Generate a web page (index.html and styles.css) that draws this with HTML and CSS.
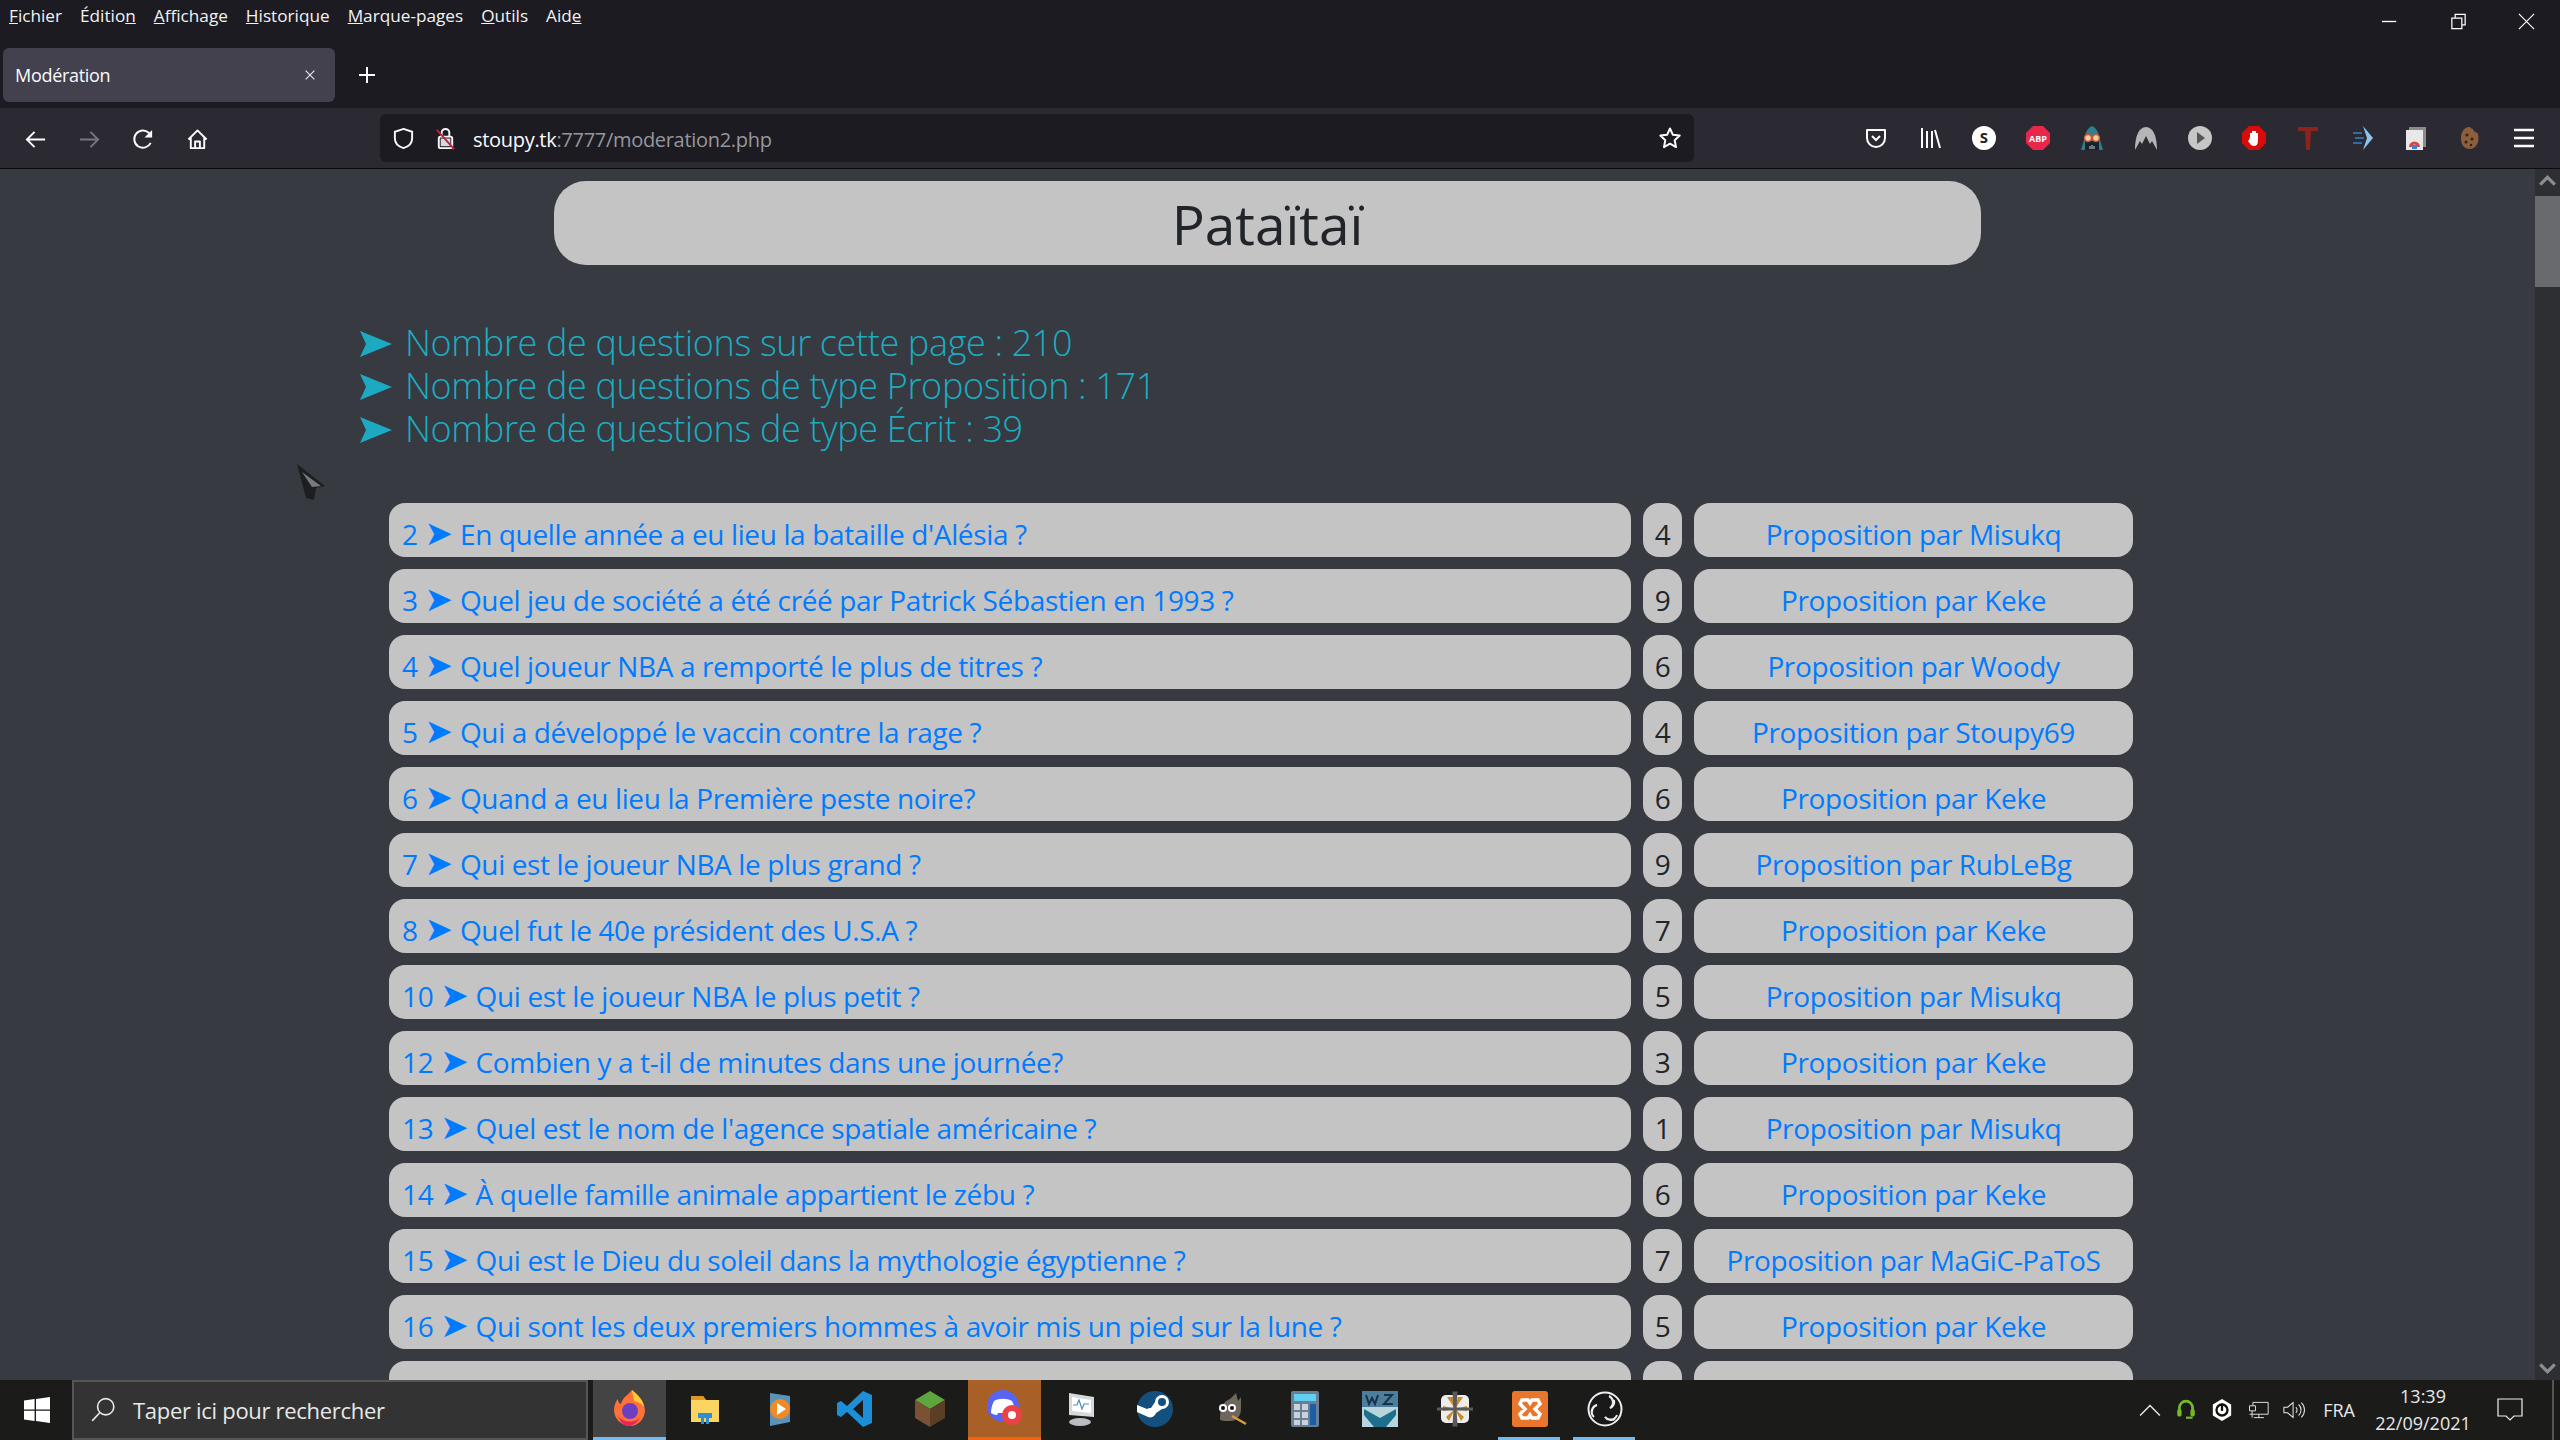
FILE: index.html
```html
<!DOCTYPE html>
<html lang="fr">
<head>
    <meta charset="UTF-8">
    <title>Modération</title>
    <link rel="stylesheet" href="styles.css">
</head>
<body>
<div class="window">
    <header class="titlebar">
        <div class="menu-row">
            <nav class="menu">
                <span><u>F</u>ichier</span>
                <span>Éditio<u>n</u></span>
                <span><u>A</u>ffichage</span>
                <span><u>H</u>istorique</span>
                <span><u>M</u>arque-pages</span>
                <span><u>O</u>utils</span>
                <span>Aid<u>e</u></span>
            </nav>
            <div class="win-controls">
                <svg viewBox="0 0 20 20"><path d="M1 10h15" stroke="#fff" stroke-width="1.400"/></svg>
                <svg viewBox="0 0 20 20"><path d="M3 6.500h10.500v11H3zM6.500 6.500V2.500H17v11h-3.500" fill="none" stroke="#fff" stroke-width="1.300"/></svg>
                <svg viewBox="0 0 20 20"><path d="M2 2l16 16M18 2L2 18" stroke="#fff" stroke-width="1.200"/></svg>
            </div>
        </div>
        <div class="tab-row">
            <div class="tab">
                <span>Modération</span>
                <svg class="tab-close" viewBox="0 0 16 16"><path d="M3 3l10 10M13 3L3 13" stroke="#e6e6e6" stroke-width="1.400"/></svg>
            </div>
            <svg class="tab-new" viewBox="0 0 20 20"><path d="M10 2v16M2 10h16" stroke="#fbfbfe" stroke-width="2"/></svg>
        </div>
    </header>

    <div class="navbar">
        <div class="nav-buttons">
            <svg viewBox="0 0 24 24"><path d="M22 12H3M11 4l-8 8 8 8" fill="none" stroke="#fbfbfe" stroke-width="2"/></svg>
            <svg viewBox="0 0 24 24"><path d="M2 12h19M13 4l8 8-8 8" fill="none" stroke="#77767e" stroke-width="2"/></svg>
            <svg viewBox="0 0 24 24"><path d="M19.500 15.500A9 9 0 1 1 17.500 5L20 8" fill="none" stroke="#fbfbfe" stroke-width="2"/><path d="M21 2v8h-8z" fill="#fbfbfe"/></svg>
            <svg viewBox="0 0 24 24"><path d="M2.500 12L12 2.500 21.500 12M5 10v11h14V10M9.500 21v-7h5v7" fill="none" stroke="#fbfbfe" stroke-width="2" stroke-linejoin="round"/></svg>
        </div>
        <div class="urlbar">
            <svg class="url-icon" viewBox="0 0 24 24"><path d="M12 2l9 3v7c0 5-4 8.500-9 10-5-1.500-9-5-9-10V5z" fill="none" stroke="#fbfbfe" stroke-width="2"/></svg>
            <svg class="url-icon" viewBox="0 0 24 24"><path d="M8 10V6a4 4 0 0 1 8 0v4" fill="none" stroke="#fbfbfe" stroke-width="2"/><rect x="5" y="10" width="14" height="12" rx="2" fill="none" stroke="#fbfbfe" stroke-width="2"/><rect x="7" y="12" width="10" height="8" fill="#d8d8dc"/><path d="M3 3l18 20" stroke="#c4213f" stroke-width="2"/></svg>
            <span class="url-text">stoupy.tk<span class="url-dim">:7777/moderation2.php</span></span>
            <svg class="url-star" viewBox="0 0 24 24"><path d="M12 2.500l2.900 6.300 6.800.8-5 4.700 1.300 6.800-6-3.400-6 3.400 1.300-6.800-5-4.700 6.800-.8z" fill="none" stroke="#fbfbfe" stroke-width="2" stroke-linejoin="round"/></svg>
        </div>
        <div class="addons">
            <svg viewBox="0 0 24 24"><path d="M3 4h18v8a9 9 0 0 1-18 0z" fill="none" stroke="#fbfbfe" stroke-width="2" stroke-linejoin="round"/><path d="M8 10l4 4 4-4" fill="none" stroke="#fbfbfe" stroke-width="2"/></svg>
            <svg viewBox="0 0 24 24"><path d="M4 2v20M9 5v17M14 5v17M17 4l5 18" fill="none" stroke="#fbfbfe" stroke-width="2"/></svg>
            <svg viewBox="0 0 24 24"><circle cx="12" cy="12" r="12" fill="#fff"/><text x="12" y="17" class="icon-letter" fill="#222">S</text></svg>
            <svg viewBox="0 0 24 24"><path d="M7 0h10l7 7v10l-7 7H7l-7-7V7z" fill="#e8274b"/><text x="12" y="16" class="icon-small" fill="#fff">ABP</text></svg>
            <svg viewBox="0 0 24 24"><path d="M12 0c5 2 7 8 8 14l3 10H1l3-10C5 8 7 2 12 0z" fill="#2f7f8f"/><rect x="5" y="15" width="14" height="9" fill="#18232a"/><circle cx="8" cy="12" r="3.500" fill="#f1c9a9" stroke="#c9572c" stroke-width="1.500"/><circle cx="16" cy="12" r="3.500" fill="#f1c9a9" stroke="#c9572c" stroke-width="1.500"/><path d="M10 23v-3M12 23v-4M14 23v-3" stroke="#c8d0d4"/></svg>
            <svg viewBox="0 0 24 24"><path d="M1 24C1 10 5 1 12 1s11 9 11 23l-5-9-2 3-4-8-4 8-2-3z" fill="#b5b5b8"/></svg>
            <svg viewBox="0 0 24 24"><circle cx="12" cy="12" r="12" fill="#c6c6c6"/><path d="M9 6l8 6-8 6z" fill="#555"/></svg>
            <svg viewBox="0 0 24 24"><path d="M7 0h10l7 7v10l-7 7H7l-7-7V7z" fill="#d90c0c"/><path d="M8 11V7h2V5h4v2h2v8c0 3-1.500 5-4 5s-4-2-6-5l1-1z" fill="#fff"/></svg>
            <svg viewBox="0 0 24 24"><path d="M2 1h20v4h-7l-1 19h-4L9 5H2z" fill="#8c231c"/></svg>
            <svg viewBox="0 0 24 24"><path d="M13 0l10 12-10 12 4-12z" fill="#8cc4ee"/><path d="M3 7h9M5 12h9M3 17h9" stroke="#2f6da8" stroke-width="2"/></svg>
            <svg viewBox="0 0 24 24"><rect x="5" y="1" width="17" height="20" fill="#8b8b8b"/><rect x="2" y="4" width="17" height="20" fill="#e8e8e8"/><path d="M5 21a5.500 5.500 0 0 1 11 0h-3a2.500 2.500 0 0 0-5 0z" fill="#d9473a"/><rect x="8" y="19" width="5" height="4" fill="#3c7de0"/></svg>
            <svg viewBox="0 0 24 24"><path d="M11 1c2 0 2 2 4 2 0 3 4 3 5 5 2 8-2 15-8 15S3 19 3 12 7 1 11 1z" fill="#8b5e3c"/><circle cx="9" cy="9" r="1.500" fill="#33200f"/><circle cx="14" cy="13" r="1.500" fill="#33200f"/><circle cx="8" cy="16" r="1.500" fill="#33200f"/><circle cx="13" cy="19" r="1.200" fill="#33200f"/></svg>
            <svg viewBox="0 0 24 24"><path d="M2 4h20M2 12h20M2 20h20" stroke="#fbfbfe" stroke-width="2.500"/></svg>
        </div>
    </div>

    <div class="viewport">
        <main class="page">
            <h1 class="site-title">Pataïtaï</h1>
            <div class="stats">
                <p><svg class="stat-arrow" viewBox="0 0 32 26"><path d="M0 0l32 13L0 26l6-13z"/></svg>Nombre de questions sur cette page : 210</p>
                <p><svg class="stat-arrow" viewBox="0 0 32 26"><path d="M0 0l32 13L0 26l6-13z"/></svg>Nombre de questions de type Proposition : 171</p>
                <p><svg class="stat-arrow" viewBox="0 0 32 26"><path d="M0 0l32 13L0 26l6-13z"/></svg>Nombre de questions de type Écrit : 39</p>
            </div>
            <div class="questions">
                <div class="row"><a class="cell question">2 <span class="arrow">➤</span> En quelle année a eu lieu la bataille d'Alésia ?</a><div class="cell count">4</div><a class="cell author">Proposition par Misukq</a></div>
                <div class="row"><a class="cell question">3 <span class="arrow">➤</span> Quel jeu de société a été créé par Patrick Sébastien en 1993 ?</a><div class="cell count">9</div><a class="cell author">Proposition par Keke</a></div>
                <div class="row"><a class="cell question">4 <span class="arrow">➤</span> Quel joueur NBA a remporté le plus de titres ?</a><div class="cell count">6</div><a class="cell author">Proposition par Woody</a></div>
                <div class="row"><a class="cell question">5 <span class="arrow">➤</span> Qui a développé le vaccin contre la rage ?</a><div class="cell count">4</div><a class="cell author">Proposition par Stoupy69</a></div>
                <div class="row"><a class="cell question">6 <span class="arrow">➤</span> Quand a eu lieu la Première peste noire?</a><div class="cell count">6</div><a class="cell author">Proposition par Keke</a></div>
                <div class="row"><a class="cell question">7 <span class="arrow">➤</span> Qui est le joueur NBA le plus grand ?</a><div class="cell count">9</div><a class="cell author">Proposition par RubLeBg</a></div>
                <div class="row"><a class="cell question">8 <span class="arrow">➤</span> Quel fut le 40e président des U.S.A ?</a><div class="cell count">7</div><a class="cell author">Proposition par Keke</a></div>
                <div class="row"><a class="cell question">10 <span class="arrow">➤</span> Qui est le joueur NBA le plus petit ?</a><div class="cell count">5</div><a class="cell author">Proposition par Misukq</a></div>
                <div class="row"><a class="cell question">12 <span class="arrow">➤</span> Combien y a t-il de minutes dans une journée?</a><div class="cell count">3</div><a class="cell author">Proposition par Keke</a></div>
                <div class="row"><a class="cell question">13 <span class="arrow">➤</span> Quel est le nom de l'agence spatiale américaine ?</a><div class="cell count">1</div><a class="cell author">Proposition par Misukq</a></div>
                <div class="row"><a class="cell question">14 <span class="arrow">➤</span> À quelle famille animale appartient le zébu ?</a><div class="cell count">6</div><a class="cell author">Proposition par Keke</a></div>
                <div class="row"><a class="cell question">15 <span class="arrow">➤</span> Qui est le Dieu du soleil dans la mythologie égyptienne ?</a><div class="cell count">7</div><a class="cell author">Proposition par MaGiC-PaToS</a></div>
                <div class="row"><a class="cell question">16 <span class="arrow">➤</span> Qui sont les deux premiers hommes à avoir mis un pied sur la lune ?</a><div class="cell count">5</div><a class="cell author">Proposition par Keke</a></div>
                <div class="row"><a class="cell question"></a><div class="cell count"></div><a class="cell author"></a></div>
            </div>
            <!-- mouse pointer -->
            <svg class="cursor" viewBox="0 0 30 36"><path d="M1 0l28 22-9 2-2 12-8-2z" fill="#1d1e20"/><path d="M6 8l19 14-9 1z" fill="#77797c"/></svg>
        </main>
        <div class="scrollbar">
            <svg viewBox="0 0 24 24"><path d="M5 15l7-7 7 7" fill="none" stroke="#8b8d91" stroke-width="3"/></svg>
            <div class="scroll-track"><div class="scroll-thumb"></div></div>
            <svg viewBox="0 0 24 24"><path d="M5 9l7 7 7-7" fill="none" stroke="#8b8d91" stroke-width="3"/></svg>
        </div>
    </div>

    <footer class="taskbar">
        <svg class="start" viewBox="0 0 26 26"><path d="M0 3.600l10.600-1.500v10.300H0zM12 1.900L26 0v12.400H12zM0 13.700h10.600v10.200L0 22.400zM12 13.700h14V26l-14-2z" fill="#fff"/></svg>
        <div class="search">
            <svg viewBox="0 0 24 24"><circle cx="14.500" cy="9" r="7.500" fill="none" stroke="#e8e8e8" stroke-width="1.500"/><path d="M9 14.500L2 22" stroke="#e8e8e8" stroke-width="1.500"/></svg>
            <span>Taper ici pour rechercher</span>
        </div>
        <div class="apps">
            <div class="app active"><svg viewBox="0 0 36 36"><path d="M20 0c6 5 12 10 13 20 0 9-7 16-15 16S2 29 2 20c0-5 2-9 4-11 0 3 1 4 3 5 1-6 6-8 11-14z" fill="#ff7139"/><path d="M20 0c6 5 11 10 12 17-3-4-6-5-10-6 0-4-2-7-2-11z" fill="#ffcb3d"/><circle cx="18" cy="21" r="8" fill="#6b3fbf"/><path d="M6 26c4 6 14 8 22 2-4 6-8 8-11 8-5 0-9-4-11-10z" fill="#e8265c"/></svg></div>
            <div class="app"><svg viewBox="0 0 36 36"><path d="M4 5h12l3 4h13v22H4z" fill="#fcd462"/><path d="M4 5h12l3 4H4z" fill="#d89a25"/><rect x="11" y="22" width="14" height="5" fill="#2d8fd5"/><path d="M14 27h3v6h-3zM19 27h3v6h-3z" fill="#2d8fd5"/></svg></div>
            <div class="app"><svg viewBox="0 0 36 36"><path d="M8 2l20 3v26L8 35z" fill="#5b93b8"/><circle cx="18" cy="18" r="10" fill="#f08a24"/><path d="M15 12l9 6-9 6z" fill="#fff"/></svg></div>
            <div class="app"><svg viewBox="0 0 36 36"><path d="M26 0l9 4v28l-9 4L10 21l-6 5-4-2V12l4-2 6 5zM26 9l-10 9 10 9z" fill="#1c8fd8"/></svg></div>
            <div class="app"><svg viewBox="0 0 36 36"><path d="M18 0l15 9-15 9-15-9z" fill="#5da63d"/><path d="M3 9l15 9v18L3 27z" fill="#7a5233"/><path d="M33 9l-15 9v18l15-9z" fill="#5c3d25"/></svg></div>
            <div class="app discord"><svg viewBox="0 0 36 36"><circle cx="16" cy="16" r="16" fill="#5865f2"/><path d="M7 11c5-3 13-3 18 0 2 4 3 8 3 12-2 1-4 2-6 2l-1-2H11l-1 2c-2 0-4-1-6-2 0-4 1-8 3-12z" fill="#fff"/><circle cx="25" cy="25" r="10" fill="#ed4245"/><circle cx="25" cy="25" r="4" fill="#fff"/></svg></div>
            <div class="app"><svg viewBox="0 0 36 36"><path d="M7 2l25 4v20L7 24z" fill="#d6d9dc"/><path d="M10 6l19 3v13L10 20z" fill="#fff"/><path d="M11 14h4l2-5 3 9 2-5h5" fill="none" stroke="#4a8cc7" stroke-width="1.200"/><ellipse cx="18" cy="31" rx="11" ry="4" fill="#b9bcc0"/></svg></div>
            <div class="app"><svg viewBox="0 0 36 36"><circle cx="18" cy="18" r="18" fill="#14507e"/><path d="M0 21l11 5a6 6 0 0 0 8-4l6-4a7 7 0 1 0-7-7l-4 6a6 6 0 0 0-4 1L0 14z" fill="#fff"/><circle cx="25" cy="11" r="4" fill="#14507e"/></svg></div>
            <div class="app"><svg viewBox="0 0 36 36"><path d="M8 28c0-12 4-18 10-20l6-6 2 8 3-4v12c0 6-4 12-10 12-6 0-11 0-11-2z" fill="#6e675c"/><circle cx="11" cy="17" r="4" fill="#fff"/><circle cx="20" cy="17" r="4" fill="#fff"/><circle cx="11" cy="17" r="2" fill="#111"/><circle cx="20" cy="17" r="2" fill="#111"/><path d="M20 25l14 8" stroke="#d99a3c" stroke-width="2.500"/></svg></div>
            <div class="app"><svg viewBox="0 0 36 36"><rect x="4" width="28" height="36" rx="2" fill="#6a7f94"/><rect x="7" y="3" width="22" height="7" fill="#5fd0f0"/><path d="M7 13h6v6H7zM15 13h6v6h-6zM7 21h6v6H7zM15 21h6v6h-6zM7 29h6v5H7zM15 29h6v5h-6z" fill="#c9d2da"/><rect x="23" y="13" width="6" height="21" fill="#1c5da8"/></svg></div>
            <div class="app"><svg viewBox="0 0 36 36"><rect width="36" height="36" fill="#b6d5dd"/><rect width="36" height="16" fill="#4d7f9c"/><path d="M2 18l16 9 16-9v6l-10 12H12L2 24z" fill="#1e6f8c"/><path d="M4 4l3 9 3-6 3 6 3-9M22 4h8l-8 9h9" fill="none" stroke="#17324a" stroke-width="2"/></svg></div>
            <div class="app"><svg viewBox="0 0 36 36"><rect x="4" y="4" width="28" height="28" rx="5" fill="#ededed"/><path d="M18 18L10 6h6zM18 18l8-12h-5zM18 18l12 2v-5zM18 18l6 12 3-4zM18 18l-6 12-3-4zM18 18L6 20v-5z" fill="#c98a2c"/><path d="M18 18l-1-16h2zM18 18l-1 16h2zM18 18H0M18 18h18" stroke="#5a5a5a" stroke-width="3"/></svg></div>
            <div class="app running"><svg viewBox="0 0 36 36"><rect width="36" height="36" rx="3" fill="#e8762c"/><path d="M10 9h6l2 3 2-3h6l2 4-5 5 5 5-2 4h-6l-2-3-2 3h-6l-2-4 5-5-5-5z" fill="none" stroke="#fff" stroke-width="3.500"/></svg></div>
            <div class="app running"><svg viewBox="0 0 36 36"><circle cx="18" cy="18" r="16.500" fill="#191919" stroke="#eee" stroke-width="2"/><path d="M22 5a7 7 0 0 1 1 12c3-1 5-4 4-8M30 24a7 7 0 0 1-12 2c2 3 7 4 10 2M7 26a7 7 0 0 1 3-12c-3 1-5 4-5 7" fill="#eee" stroke="#eee" stroke-width="2"/></svg></div>
        </div>
        <div class="tray">
            <svg viewBox="0 0 20 12"><path d="M1 11l9-9 9 9" fill="none" stroke="#e8e8e8" stroke-width="1.300"/></svg>
            <svg viewBox="0 0 18 20"><path d="M3 12V8a6 6 0 0 1 12 0v4" fill="none" stroke="#76b82a" stroke-width="2.500"/><rect x="1" y="9" width="4" height="7" rx="2" fill="#76b82a"/><rect x="13" y="9" width="4" height="7" rx="2" fill="#76b82a"/><path d="M9 17h6" stroke="#76b82a" stroke-width="2"/></svg>
            <svg viewBox="0 0 22 24"><path d="M11 0l10 6v12l-10 6L1 18V6z" fill="#fff"/><circle cx="11" cy="12" r="6" fill="none" stroke="#111" stroke-width="2.500"/><path d="M11 5v8" stroke="#111" stroke-width="2.500"/></svg>
            <svg viewBox="0 0 26 20"><path d="M7 1h18v14H3M7 1v4M14 15v4M8 19h12M3 5h7v6H3zM6 11v8" fill="none" stroke="#e8e8e8" stroke-width="1.100"/></svg>
            <svg viewBox="0 0 24 20"><path d="M1 7h4l6-5v16l-6-5H1zM14 7a4 4 0 0 1 0 6M17 4a8 8 0 0 1 0 12M20 2a11 11 0 0 1 0 16" fill="none" stroke="#e8e8e8" stroke-width="1.100"/></svg>
            <span class="lang">FRA</span>
            <div class="clock"><span>13:39</span><span>22/09/2021</span></div>
            <svg class="notif" viewBox="0 0 26 24"><path d="M1 1h24v17H17l-4 4-4-4H1z" fill="none" stroke="#f0f0f0" stroke-width="1.200"/></svg>
            <div class="show-desktop"></div>
        </div>
    </footer>
</div>
</body>
</html>
```

FILE: styles.css
```css
* {
    box-sizing: border-box;
}
html, body {
    margin: 0;
    height: 100%;
    overflow: hidden;
}
body {
    font-family: "Open Sans", "Liberation Sans", sans-serif;
    background-color: #1c1b22;
}
svg {
    display: block;
    flex: none;
}
.window {
    display: flex;
    flex-direction: column;
    width: 2560px;
    height: 1440px;
}

/* browser top */
.titlebar {
    height: 108px;
    background-color: #1c1b22;
}
.menu-row {
    display: flex;
    justify-content: space-between;
    height: 48px;
    padding-left: 9px;
    color: #f2f2f2;
    font-size: 17.200px;
}
.menu {
    display: flex;
    gap: 18px;
    height: 30px;
    align-items: center;
}
.win-controls {
    display: flex;
    gap: 49px;
    padding: 12px 24px 0 0;
}
.win-controls svg {
    width: 19px;
    height: 19px;
}
.tab-row {
    display: flex;
    align-items: center;
    height: 54px;
    padding-left: 3px;
    color: #fbfbfe;
}
.tab {
    display: flex;
    align-items: center;
    justify-content: space-between;
    width: 332px;
    height: 54px;
    padding: 0 18px 0 12px;
    background-color: #42414d;
    border-radius: 6px;
    font-size: 18px;
    letter-spacing: -0.3px;
}
.tab-close {
    width: 14px;
    height: 14px;
}
.tab-new {
    width: 20px;
    height: 20px;
    margin-left: 22px;
}

.navbar {
    display: flex;
    align-items: center;
    height: 61px;
    background-color: #2b2a33;
    border-bottom: 1px solid #0c0c0f;
}
.nav-buttons {
    display: flex;
    gap: 31px;
    width: 380px;
    padding: 2px 0 0 24px;
}
.nav-buttons svg {
    width: 23px;
    height: 23px;
}
.urlbar {
    display: flex;
    align-items: center;
    width: 1314px;
    height: 48px;
    padding: 0 12px;
    background-color: #1c1b22;
    border-radius: 6px;
}
.url-icon {
    width: 23px;
    height: 23px;
    margin-right: 19px;
}
.url-text {
    flex: 1;
    margin: 2px 0 0 -3px;
    color: #fbfbfe;
    font-size: 20px;
    letter-spacing: -0.3px;
}
.url-dim {
    color: #97969c;
}
.url-star {
    width: 24px;
    height: 24px;
}
.addons {
    display: flex;
    gap: 30px;
    padding-left: 170px;
}
.addons svg {
    width: 24px;
    height: 24px;
}
.icon-letter {
    font: bold 15px "Open Sans", sans-serif;
    text-anchor: middle;
}
.icon-small {
    font: bold 9px "Open Sans", sans-serif;
    text-anchor: middle;
}

/* the web page */
.viewport {
    display: flex;
    flex: 1;
    min-height: 0;
}
.page {
    position: relative;
    flex: 1;
    overflow: hidden;
    background-color: #373a40;
}
.site-title {
    width: 1427px;
    height: 84px;
    margin: 12px auto 0;
    padding-top: 2px;
    background-color: #c4c4c4;
    border-radius: 32px;
    color: #212529;
    font-size: 55px;
    font-weight: 400;
    line-height: 82px;
    text-align: center;
}
.stats {
    margin: 56px 0 0 360px;
    color: #1cacc2;
    font-size: 36px;
    font-weight: 350;
    letter-spacing: -0.35px;
    line-height: 43px;
}
.stats p {
    display: flex;
    align-items: center;
    gap: 13px;
    height: 43px;
    margin: 0;
}
.stat-arrow {
    width: 32px;
    height: 26px;
    margin-top: 3px;
    fill: #1ea9c2;
}
.arrow {
    font-family: "DejaVu Sans", sans-serif;
    line-height: 0;
}
.questions {
    display: flex;
    flex-direction: column;
    gap: 12px;
    width: 1744px;
    margin: 53px 0 0 389px;
    font-size: 28px;
    letter-spacing: -0.37px;
}
.questions .arrow {
    font-size: 34px;
    letter-spacing: 0;
}
.row {
    display: flex;
    gap: 12px;
    flex: none;
    height: 54px;
}
.cell {
    height: 54px;
    padding-top: 8px;
    background-color: #c4c4c4;
    border-radius: 16px;
    color: #007bff;
    line-height: 47px;
    white-space: nowrap;
}
.question {
    width: 1242px;
    padding-left: 13px;
}
.count {
    width: 39px;
    color: #212529;
    text-align: center;
}
.author {
    flex: 1;
    text-align: center;
}
.cursor {
    position: absolute;
    left: 296px;
    top: 295px;
    width: 30px;
    height: 36px;
}
.scrollbar {
    display: flex;
    flex-direction: column;
    align-items: center;
    width: 25px;
    background-color: #2e2f33;
}
.scrollbar svg {
    width: 25px;
    height: 25px;
}
.scroll-track {
    flex: 1;
    width: 100%;
    padding-top: 2px;
}
.scroll-thumb {
    height: 91px;
    background-color: #686a6e;
}

/* windows taskbar */
.taskbar {
    display: flex;
    height: 60px;
    background-color: #1b1b1a;
    color: #e8e8e8;
}
.start {
    width: 26px;
    height: 26px;
    margin: 17px 22px 0 24px;
}
.search {
    display: flex;
    align-items: center;
    gap: 17px;
    width: 516px;
    padding-left: 16px;
    background-color: #333;
    border: 2px solid #555;
    font-size: 22px;
    letter-spacing: -0.3px;
}
.search svg {
    width: 26px;
    height: 26px;
}
.apps {
    display: flex;
    gap: 2px;
    margin-left: 5px;
}
.app {
    position: relative;
    display: flex;
    align-items: center;
    justify-content: center;
    width: 73px;
    height: 60px;
    padding-bottom: 2px;
}
.app svg {
    width: 36px;
    height: 36px;
}
.app.active {
    background-color: #444;
    border-bottom: 3px solid #76b9ed;
}
.app.discord {
    background-color: #a86027;
    border-bottom: 3px solid #f7630c;
}
.app.running::after {
    content: "";
    position: absolute;
    left: 5px;
    right: 6px;
    bottom: 0;
    height: 3px;
    background-color: #76b9ed;
}
.tray {
    display: flex;
    align-items: center;
    flex: 1;
    justify-content: flex-end;
    gap: 14px;
}
.tray svg {
    width: 22px;
    height: 22px;
}
.lang {
    margin: 0 4px;
    font-size: 18px;
}
.clock {
    display: flex;
    flex-direction: column;
    align-items: center;
    gap: 4px;
    width: 100px;
    font-size: 18px;
    line-height: 23px;
}
.tray .notif {
    width: 26px;
    height: 24px;
    margin-left: 10px;
}
.show-desktop {
    width: 2px;
    height: 60px;
    margin: 0 6px 0 15px;
    background-color: #555;
}
```
